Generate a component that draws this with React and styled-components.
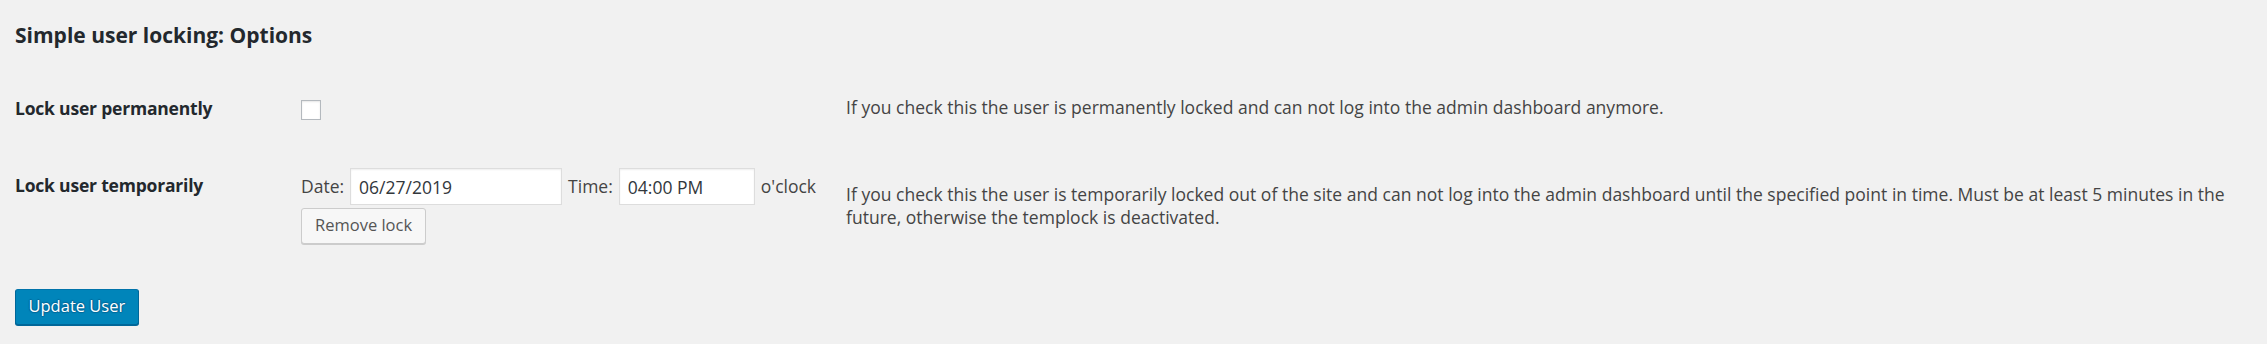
import React from "react";
import styled, { createGlobalStyle } from "styled-components";

const Global = createGlobalStyle`
  html, body { margin: 0; padding: 0; background: #f1f1f1; }
  body {
    font-family: "Open Sans", "Noto Sans", sans-serif;
    color: #444;
    font-size: 16.25px;
    line-height: 1.4;
  }
  * { box-sizing: border-box; }
`;

const Page = styled.div`
  padding: 0 15px;
  width: 2267px;
  height: 344px;
`;

const Title = styled.h2`
  margin: 0;
  padding-top: 22px;
  font-size: 21px;
  line-height: 27px;
  font-weight: 700;
  color: #23282d;
`;

const FormTable = styled.div`
  margin-top: 23px;
  display: flex;
  flex-direction: column;
`;

const Row = styled.div`
  display: grid;
  grid-template-columns: 286px 545px 1fr;
  min-height: ${(p) => p.$h}px;
`;

const Th = styled.div`
  padding-top: 25px;
  font-size: 17.5px;
  line-height: 23px;
  font-weight: 700;
  letter-spacing: -0.2px;
  color: #23282d;
`;

const Td = styled.div`
  padding-top: ${(p) => p.$pt}px;
  padding-bottom: 19px;
  font-size: 17.5px;
  line-height: 23px;
  color: #444;
`;

const Desc = styled.div`
  padding-right: 15px;
  font-size: 17.5px;
  line-height: 23px;
  letter-spacing: 0.02px;
  color: #444;
  align-self: ${(p) => (p.$middle ? "center" : "start")};
  padding-top: ${(p) => (p.$middle ? 0 : 24)}px;
`;

const Checkbox = styled.span`
  display: block;
  width: 20px;
  height: 20px;
  background: #fff;
  border: 1px solid #b4b9be;
  box-shadow: inset 0 1px 2px rgba(0, 0, 0, 0.1);
`;

const Inline = styled.div`
  display: flex;
  align-items: center;
  gap: 6px;
`;

const Label = styled.span`
  color: #444;
`;

const TextInput = styled.input`
  width: ${(p) => p.$w}px;
  height: 37px;
  padding: 0 8px;
  margin: 0;
  border: 1px solid #ddd;
  background: #fff;
  box-shadow: inset 0 1px 2px rgba(0, 0, 0, 0.07);
  color: #32373c;
  font-family: inherit;
  font-size: 17.5px;
  outline: none;
`;

const Button = styled.button`
  display: block;
  height: 36px;
  margin: 0;
  padding: 0 13px 1px;
  font-family: inherit;
  font-size: 16.5px;
  line-height: 1;
  border-radius: 3px;
  border: 1px solid #ccc;
  background: #f7f7f7;
  color: #555;
  box-shadow: 0 1px 0 #ccc;
  cursor: pointer;
`;

const SmallButton = styled(Button)`
  margin-top: 3px;
`;

const PrimaryButton = styled(Button)`
  background: #0085ba;
  border-color: #0073aa #006799 #006799;
  box-shadow: 0 1px 0 #006799;
  color: #fff;
  text-shadow: 0 -1px 1px #006799, 1px 0 1px #006799, 0 1px 1px #006799, -1px 0 1px #006799;
  padding: 0 12.5px 1px;
`;

const Submit = styled.div`
  padding-top: 26px;
`;

export default function App() {
  return (
    <>
      <Global />
      <Page>
        <Title>Simple user locking: Options</Title>
        <FormTable>
          <Row $h={77}>
            <Th>Lock user permanently</Th>
            <Td $pt={28}>
              <Checkbox role="checkbox" aria-checked="false" />
            </Td>
            <Desc>
              If you check this the user is permanently locked and can not log into the admin dashboard anymore.
            </Desc>
          </Row>
          <Row $h={0}>
            <Th>Lock user temporarily</Th>
            <Td $pt={19}>
              <Inline>
                <Label>Date:</Label>
                <TextInput $w={212} defaultValue="06/27/2019" />
                <Label>Time:</Label>
                <TextInput $w={136} defaultValue="04:00 PM" />
                <Label>o'clock</Label>
              </Inline>
              <SmallButton type="button">Remove lock</SmallButton>
            </Td>
            <Desc $middle>
              If you check this the user is temporarily locked out of the site and can not log into the admin dashboard until the specified point in time. Must be at least 5 minutes in the future, otherwise the templock is deactivated.
            </Desc>
          </Row>
        </FormTable>
        <Submit>
          <PrimaryButton type="button">Update User</PrimaryButton>
        </Submit>
      </Page>
    </>
  );
}
